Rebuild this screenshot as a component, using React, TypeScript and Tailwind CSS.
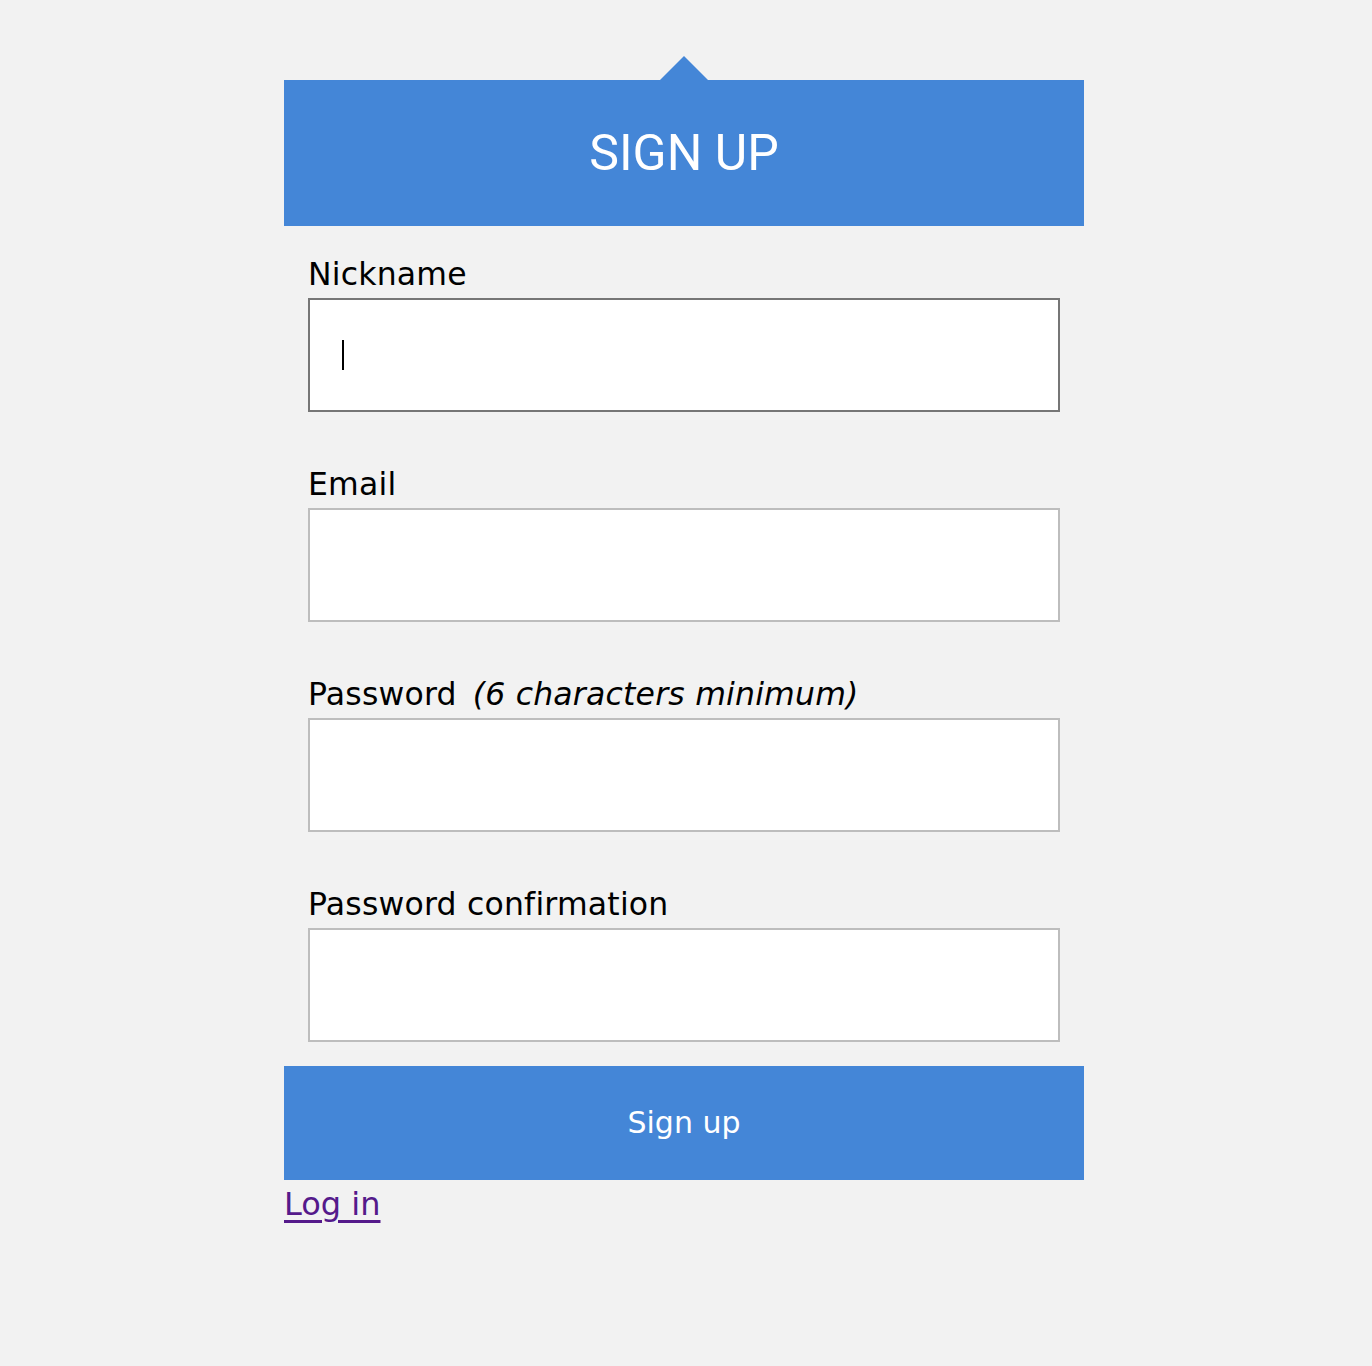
import React from 'react';

const FIELDS = [
    { id: 'nickname', label: 'Nickname', type: 'text', focused: true },
    { id: 'email', label: 'Email', type: 'email' },
    { id: 'password', label: 'Password', hint: '(6 characters minimum)', type: 'password' },
    { id: 'password_confirmation', label: 'Password confirmation', type: 'password' },
];

export default function App() {
    return (
        <div className="min-h-screen bg-[#f2f2f2] pt-[56px] font-['DejaVu_Sans',sans-serif] text-black">
            <div className="w-[800px] ml-[284px]">
                {/* Header */}
                <div className="relative mt-[24px] h-[146px] bg-[#4486d7] flex items-center justify-center">
                    <div className="absolute -top-[24px] left-1/2 -translate-x-1/2 w-0 h-0 border-l-[24px] border-r-[24px] border-b-[24px] border-l-transparent border-r-transparent border-b-[#4486d7]" />
                    <h1 className="text-white text-[50px] font-['Roboto',sans-serif] font-normal leading-none">SIGN UP</h1>
                </div>

                <form className="px-[24px] pt-[30px]" onSubmit={(e) => e.preventDefault()}>
                    {FIELDS.map((f, i) => (
                        <div key={f.id} className={i > 0 ? 'mt-[54px]' : ''}>
                            <label htmlFor={f.id} className="block text-[31.5px] leading-[36px] tracking-[0.2px]">
                                {f.label}
                                {f.hint && <em className="ml-[16px] italic">{f.hint}</em>}
                            </label>
                            <div className="relative mt-[6px]">
                                <input
                                    id={f.id}
                                    type={f.type}
                                    className={`block w-[752px] h-[114px] bg-white border-2 outline-none px-[33px] text-[30px] ${f.focused ? 'border-[#767676]' : 'border-[#bdbdbd]'}`}
                                />
                                {f.focused && (
                                    <span className="absolute left-[34px] top-[42px] w-[2px] h-[30px] bg-black" />
                                )}
                            </div>
                        </div>
                    ))}
                </form>

                <button
                    type="submit"
                    className="mt-[24px] w-full h-[114px] bg-[#4486d7] text-white text-[30px] leading-none"
                >
                    Sign up
                </button>
                <a href="#" className="inline-block mt-[6px] text-[32px] leading-[37px] text-[#551a8b] underline underline-offset-[5px]">
                    Log in
                </a>
            </div>
        </div>
    );
}
